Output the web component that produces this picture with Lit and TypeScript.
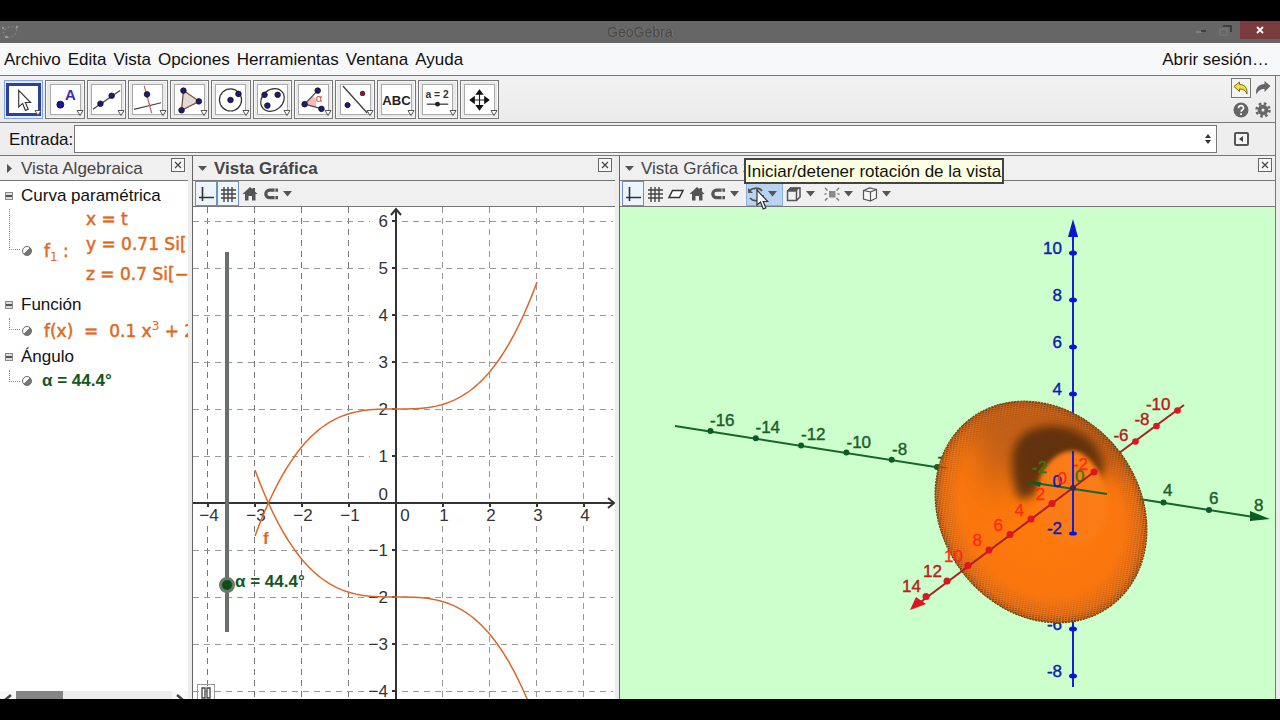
import { LitElement, html, svg, css } from "lit";
import { customElement, property } from "lit/decorators.js";

const range = (from: number, to: number) =>
  Array.from({ length: to - from + 1 }, (_, i) => from + i);

/* ---------- icons ---------- */

const point = (x: number, y: number, r = 3) =>
  svg`<circle cx=${x} cy=${y} r=${r} fill="#1f1a78" stroke="#111" stroke-width="0.8"/>`;

const tools = [
  { name: "Elige y mueve", art: svg`<path d="M10 5v19l4.500-4 3.200 8 3.300-1.400-3.400-7.600h6z" fill="#fff" stroke="#333" stroke-width="1.300"/>` },
  { name: "Punto", art: svg`<circle cx="10" cy="21" r="3.700" fill="#1d12b0" stroke="#111"/><text x="15" y="16" class="glyph-a">A</text>` },
  { name: "Recta", art: svg`<path d="M1 26L30 6" stroke="#444" stroke-width="1.300"/>${point(9, 20)}${point(21, 11.500)}` },
  { name: "Recta perpendicular", art: svg`<path d="M1 26L30 19" stroke="#444" stroke-width="1.300"/><path d="M12 1l8 29" stroke="#c0606c" stroke-width="1.300"/>${point(15, 10)}` },
  { name: "Polígono", art: svg`<path d="M9 6L26 17.500 7 27z" fill="#e6d9d2" stroke="#7a4a45" stroke-width="1.300"/>${point(9, 6)}${point(25.500, 17.500)}${point(7, 27)}` },
  { name: "Circunferencia", art: svg`<circle cx="15.500" cy="16" r="11.800" fill="none" stroke="#333" stroke-width="1.300"/>${point(15.500, 16)}${point(24, 9.500)}` },
  { name: "Elipse", art: svg`<ellipse cx="15.500" cy="16" rx="13.500" ry="11" transform="rotate(-40 15.500 16)" fill="none" stroke="#333" stroke-width="1.300"/>${point(7, 10.500)}${point(21, 10.500)}${point(10, 22)}` },
  { name: "Ángulo", art: svg`<path d="M7 20L14 11a11 11 0 0 1 4 12z" fill="#f6b9bd"/><path d="M20 6L6 20.500 25 25.500" fill="none" stroke="#444" stroke-width="1.300"/><text x="18" y="18" class="glyph-alpha">α</text>${point(20, 6)}${point(6, 20.500)}${point(24, 25.500)}` },
  { name: "Simetría axial", art: svg`<path d="M2 1L28 30" stroke="#444" stroke-width="1.500"/>${point(7, 21.500, 2.800)}<circle cx="23" cy="9" r="2.800" fill="#6b2238"/>` },
  { name: "Texto", art: svg`<text x="15.500" y="21" text-anchor="middle" class="glyph-abc">ABC</text>` },
  { name: "Deslizador", art: svg`<text x="15" y="14" text-anchor="middle" class="glyph-a2">a = 2</text><path d="M4 20.500h23" stroke="#333" stroke-width="1.300"/><circle cx="15.500" cy="20.500" r="2.600" fill="#222"/>` },
  { name: "Desplaza vista gráfica", art: svg`<path d="M15.500 8v16M8 16h16" stroke="#222" stroke-width="1.200"/><path d="M15.500 4.500l4.500 6h-9zM15.500 27.500l4.500-6h-9zM4.500 16l6-4.500v9zM26.500 16l-6-4.500v9z" fill="#111"/>` },
];

const icons: Record<string, unknown> = {
  axes: svg`<path d="M5.500 2v14M2 12.500h15" stroke="#333" stroke-width="1.600" fill="none"/>`,
  grid: svg`<path d="M5 2v15M9 2v15M13 2v15M2 5h15M2 9h15M2 13h15" stroke="#444" stroke-width="1.400"/>`,
  plane: svg`<path d="M5.500 5.500H16L12.500 12.500H2z" fill="#fff" stroke="#333" stroke-width="1.500"/>`,
  home: svg`<path d="M9 2l2.500 2.300V3h2.500v3.600l2.500 2.400H14.500v6.500H11V11H7.500v4.500H4V9H1.500z" fill="#555"/>`,
  magnet: svg`<path d="M16 5.200H7.500a3.700 3.700 0 0 0 0 7.400H16" fill="none" stroke="#555" stroke-width="3.200"/><path d="M13 3.500v3.400M13 11v3.400" stroke="#ddd" stroke-width="1"/>`,
  rotate: svg`<path d="M2 7a7 5 0 0 1 13-1M16 10a7 5 0 0 1-13 3" fill="none" stroke="#555" stroke-width="1.800"/><path d="M1 3v5h5z" fill="#555"/>`,
  box: svg`<path d="M2.500 6h9v9.500h-9zM2.500 6l3-3h9.500v9l-3.500 3.500" fill="none" stroke="#555" stroke-width="1.500"/><path d="M2 6l3.500-3.500h9.500L11.500 6z" fill="#555"/>`,
  light: svg`<path d="M6 6h6.500v6.500H6z" fill="#8a8a8a"/><path d="M2 3l2.500 2.500M16 3l-2.500 2.500M2 15.500L4.500 13M16 15.500L13.500 13M1.500 9h2M14.500 9h2" stroke="#777" stroke-width="1.400"/>`,
  cube: svg`<path d="M2.500 5.500l7 1.500v9l-7-2zM9.500 7l6-2.500v8.500l-6 3M2.500 5.500L8.500 3l7 1.500" fill="#f8f8f8" stroke="#555" stroke-width="1.200"/>`,
};

const icon = (name: string) =>
  html`<svg class="icon" viewBox="0 0 18 18" aria-hidden="true">${icons[name]}</svg>`;

const caret = html`<svg class="caret" viewBox="0 0 9 6" aria-hidden="true"><path d="M0 0h9L4.500 5.500z" fill="#555"/></svg>`;

const shared = css`
  :host { display: block; }
  * { box-sizing: border-box; }
  button {
    margin: 0;
    padding: 0;
    border: 0;
    background: none;
    font: inherit;
    color: inherit;
    display: flex;
    align-items: center;
  }
  svg { display: block; }
`;

/* ---------- style bar ---------- */

@customElement("style-bar")
export class StyleBar extends LitElement {
  @property({ attribute: false }) items: { icon: string; label: string; menu?: boolean; on?: boolean }[] = [];

  static styles = [
    shared,
    css`
      .bar {
        display: flex;
        align-items: flex-start;
        height: 26px;
        padding: 0 2px;
        background: #f0f0f0;
        border-bottom: 1px solid #777;
      }
      .item { width: 21px; height: 25px; border: 1px solid transparent; justify-content: center; }
      .menu { width: 37px; margin-left: 1px; gap: 3px; justify-content: flex-start; }
      .on { width: 22px; background: #eef4fc; border-color: #6d90bd; }
      .menu.on { width: 37px; background: #b9d3f2; border-color: #8fb0dc; }
      .icon { width: 18px; height: 18px; flex: none; }
      .caret { width: 9px; height: 6px; flex: none; }
    `,
  ];

  render() {
    return html`<div class="bar" role="toolbar">
      ${this.items.map(
        (i) => html`<button
          class="item ${i.menu ? "menu" : ""} ${i.on ? "on" : ""}"
          aria-label=${i.label}
        >${icon(i.icon)}${i.menu ? caret : ""}</button>`
      )}
    </div>`;
  }
}

/* ---------- dock header ---------- */

@customElement("dock-header")
export class DockHeader extends LitElement {
  @property() label = "";
  @property({ type: Boolean }) active = false;
  @property({ type: Boolean }) folded = false;

  static styles = [
    shared,
    css`
      .head {
        display: flex;
        align-items: center;
        height: 25px;
        padding: 0 3px 0 5px;
        gap: 7px;
        background: #f0f0f0;
        border-bottom: 1px solid #777;
        color: #444;
        font-size: 17px;
      }
      .title { flex: 1; margin: 0; font: inherit; white-space: nowrap; line-height: 26px; padding-top: 2px; }
      .active { font-weight: bold; }
      .toggle { width: 9px; height: 9px; }
      .close { width: 14px; height: 14px; align-self: flex-start; margin-top: 2px; border: 1px solid #666; background: #f7f7f7; }
    `,
  ];

  render() {
    return html`<header class="head">
      <button class="toggle" aria-label="Barra de estilo">
        <svg width="9" height="9" viewBox="0 0 9 9">
          <path d=${this.folded ? "M2 0l5 4.500L2 9z" : "M0 2h9L4.500 7z"} fill="#555"/>
        </svg>
      </button>
      <h2 class="title ${this.active ? "active" : ""}">${this.label}</h2>
      <button class="close" aria-label="Cerrar">
        <svg width="12" height="12" viewBox="0 0 12 12"><path d="M3 3l6 6M9 3L3 9" stroke="#444" stroke-width="1.200"/></svg>
      </button>
    </header>`;
  }
}

/* ---------- algebra view ---------- */

@customElement("algebra-view")
export class AlgebraView extends LitElement {
  static styles = [
    shared,
    css`
      :host { display: flex; flex-direction: column; min-width: 0; overflow: hidden; background: #fff; border-right: 4px solid #ececec; }
      .tree { flex: 1; min-height: 0; margin: 0; padding: 2px 0 0; list-style: none; font-size: 17px; color: #111; white-space: nowrap; overflow: hidden; }
      .group { display: flex; align-items: center; height: 26px; padding-left: 5px; gap: 8px; }
      .fold { width: 8px; height: 8px; border: 1px solid #888; background: linear-gradient(#ddd 0 2px, #555 2px 4px, #ddd 4px); }
      .object { display: flex; align-items: center; margin-left: 9px; }
      .branch { align-self: flex-start; width: 11px; flex: none; border: 1px dotted #888; border-width: 0 0 1px 1px; }
      .curve { height: 83px; }
      .function { height: 26px; }
      .angle { height: 22px; }
      .curve .branch { height: 41px; }
      .function .branch, .angle .branch { height: 12px; }
      .marble { width: 10px; height: 10px; margin: 0 12px 0 2px; flex: none; border-radius: 50%; border: 1px solid #666; background: linear-gradient(135deg, #fff 0 45%, #777 50%); }
      .math { font-family: "DejaVu Sans", sans-serif; color: #dd6a1c; -webkit-text-stroke: 0.5px #dd6a1c; }
      .math sub, .math sup { font-size: 12px; line-height: 0; -webkit-text-stroke: 0; }
      .name { width: 42px; flex: none; }
      .rows { display: grid; grid-template-rows: 20px 30px 30px; align-items: center; align-self: flex-start; line-height: 22px; }
      .value { font-weight: bold; color: #14561c; }
      .angle .marble { margin-right: 10px; }
      .scroll { display: flex; justify-content: space-between; height: 8px; background: #ececec; overflow: hidden; }
      .thumb { width: 47px; background: #858585; }
      .rest { flex: 1; }
      .step { width: 16px; height: 16px; background: #f7f7f7; }
    `,
  ];

  render() {
    return html`
      <dock-header label="Vista Algebraica" folded></dock-header>
      <ul class="tree">
        <li class="group"><button class="fold" aria-label="Plegar"></button>Curva paramétrica</li>
        <li class="object curve">
          <span class="branch"></span><span class="marble"></span>
          <span class="math name">f<sub>1</sub> :</span>
          <span class="math rows"><span>x = t</span><span>y = 0.71 Si[</span><span>z = 0.7 Si[−</span></span>
        </li>
        <li class="group"><button class="fold" aria-label="Plegar"></button>Función</li>
        <li class="object function">
          <span class="branch"></span><span class="marble"></span>
          <span class="math">f(x)&nbsp; =&nbsp; 0.1 x<sup>3</sup> + 2</span>
        </li>
        <li class="group"><button class="fold" aria-label="Plegar"></button>Ángulo</li>
        <li class="object angle">
          <span class="branch"></span><span class="marble"></span>
          <span class="value">α = 44.4°</span>
        </li>
      </ul>
      <div class="scroll">
        <button class="step" aria-label="Izquierda"><svg width="16" height="16"><path d="M11 4L5 9l6 5" fill="none" stroke="#444" stroke-width="2.500"/></svg></button>
        <span class="thumb"></span><span class="rest"></span>
        <button class="step" aria-label="Derecha"><svg width="16" height="16"><path d="M5 4l6 5-6 5" fill="none" stroke="#444" stroke-width="2.500"/></svg></button>
      </div>`;
  }
}

/* ---------- 2D view ---------- */

const UNIT = 47;
const OX = 203;
const OY = 296;
const sx = (x: number) => OX + x * UNIT;
const sy = (y: number) => OY - y * UNIT;
const minus = (n: number) => String(n).replace("-", "−");

const plot = (f: (x: number) => number) =>
  range(-60, 60)
    .map((i) => `${i === -60 ? "M" : "L"}${sx(i / 20)} ${sy(f(i / 20)).toFixed(2)}`)
    .join("");

@customElement("graphics-view")
export class GraphicsView extends LitElement {
  static styles = [
    shared,
    css`
      :host { display: flex; flex-direction: column; min-width: 0; overflow: hidden; border-left: 1px solid #666; border-right: 4px solid #ececec; background: #fff; }
      .canvas { position: relative; flex: 1; min-height: 0; overflow: hidden; }
      .plot { position: absolute; inset: 0; width: 100%; height: 100%; font-size: 17px; }
      .grid { stroke: #777; stroke-width: 1; stroke-dasharray: 6 5; }
      .pale { stroke: #999; }
      .axis { stroke: #333; stroke-width: 2; fill: none; }
      .halo { fill: #fff; }
      .tick { fill: #333; }
      .curve { fill: none; stroke: #d9692a; stroke-width: 1.5; }
      .tag { fill: #dd6a1c; font-weight: bold; font-size: 17px; }
      .slider {
        position: absolute;
        left: 26px;
        top: 37px;
        width: 16px;
        height: 396px;
        margin: 0;
        appearance: none;
        writing-mode: vertical-lr;
        direction: rtl;
        background: linear-gradient(#6b6f6b, #6b6f6b) center / 4px 380px no-repeat;
      }
      .slider::-webkit-slider-thumb { appearance: none; width: 16px; height: 16px; border-radius: 50%; border: 3px solid #6a7a6a; background: #0c4f14; }
      .alpha { position: absolute; left: 42px; top: 365px; font-size: 17px; line-height: 20px; font-weight: bold; color: #14561c; }
      .pause { position: absolute; left: 4px; bottom: -3px; width: 18px; height: 18px; justify-content: center; border: 1px solid #999; }
    `,
  ];

  render() {
    return html`
      <dock-header label="Vista Gráfica" active></dock-header>
      <style-bar .items=${[
        { icon: "axes", label: "Ejes", on: true },
        { icon: "grid", label: "Cuadrícula", on: true },
        { icon: "home", label: "Vista estándar" },
        { icon: "magnet", label: "Captura de punto", menu: true },
      ]}></style-bar>
      <div class="canvas">
        <svg class="plot">
          ${range(-4, 4).map((n) => (n ? svg`<path class="grid ${n > 0 ? "pale" : ""}" d="M${sx(n) - 0.5} 0V600"/>` : ""))}
          ${range(-4, 6).map((n) => (n ? svg`<path class="grid pale" d="M0 ${sy(n) + 0.5}H420"/>` : ""))}
          ${range(-4, 6).map((n) => svg`<rect class="halo" x=${OX - 26} y=${sy(n) - 10} width="24" height="20"/>`)}
          ${range(-4, 4).map((n) => svg`<rect class="halo" x=${sx(n) - 12} y=${OY + 3} width="24" height="20"/>`)}
          <path class="axis" d="M${OX} 700V3M${OX - 5} 8l5-6 5 6"/>
          <path class="axis" d="M0 ${OY}H420M415 ${OY - 5}l6 5-6 5"/>
          ${range(-4, 4).map((n) => svg`<path class="axis" d="M${sx(n)} ${OY}v4"/>
            <text class="tick" x=${n ? sx(n) + 1 : sx(0) + 9} y=${OY + 18} text-anchor="middle">${minus(n)}</text>`)}
          ${range(-4, 6).map((n) => svg`<path class="axis" d="M${OX - 4} ${sy(n)}h4"/>
            <text class="tick" x=${OX - 8} y=${n ? sy(n) + 6 : OY - 3} text-anchor="end">${minus(n)}</text>`)}
          <path class="curve" d=${plot((x) => 0.1 * x ** 3 + 2)}/>
          <path class="curve" d=${plot((x) => -0.1 * x ** 3 - 2)}/>
          <text class="tag" x="70" y="337">f</text>
        </svg>
        <input class="slider" id="angle" type="range" min="0" max="360" step="0.1" value="44.4" />
        <label class="alpha" for="angle">α = 44.4°</label>
        <button class="pause" aria-label="Pausa"><svg width="12" height="12"><path d="M2 1h3v10H2zM7 1h3v10H7z" fill="#fff" stroke="#444" stroke-width="1.300"/></svg></button>
      </div>`;
  }
}

/* ---------- 3D view ---------- */

const CX = 453;
const CY = 281;

@customElement("space-view")
export class SpaceView extends LitElement {
  static styles = [
    shared,
    css`
      :host { display: flex; flex-direction: column; min-width: 0; position: relative; border-left: 1px solid #666; background: #ccffcc; }
      .scene { flex: 1; min-height: 0; width: 100%; overflow: hidden; font-size: 17px; }
      .x { stroke: #a82020; fill: none; stroke-width: 2; }
      .y { stroke: #14662a; fill: none; stroke-width: 2; }
      .z { stroke: #1420d8; fill: none; stroke-width: 2; }
      .x-dot { fill: #e01420; }
      .y-dot { fill: #0c5a24; }
      .z-dot { fill: #0c14d8; }
      .x-num { fill: #b42020; stroke: #b42020; stroke-width: 0.4; }
      .x-in { fill: #ff2a14; stroke: #ff2a14; stroke-width: 0.3; }
      .y-num { fill: #1c5c2a; stroke: #1c5c2a; stroke-width: 0.4; }
      .y-in { fill: #2f7a10; stroke: #2f7a10; stroke-width: 0.4; }
      .z-num { fill: #0c1cb0; stroke: #0c1cb0; stroke-width: 0.4; }
      .tooltip { position: absolute; left: 124px; top: 2px; height: 26px; padding: 0 1px; border: 2px solid #444; background: #fdffe2; color: #111; font-size: 17px; line-height: 24px; white-space: nowrap; }
      .pointer { position: absolute; left: 136px; top: 33px; }
    `,
  ];

  render() {
    const xBack = [[515.5, 234.5], [536.5, 219], [557.5, 203.5]];
    const xFront = range(1, 7);
    return html`
      <dock-header label="Vista Gráfica 3D"></dock-header>
      <style-bar .items=${[
        { icon: "axes", label: "Ejes", on: true },
        { icon: "grid", label: "Cuadrícula" },
        { icon: "plane", label: "Plano" },
        { icon: "home", label: "Vista estándar" },
        { icon: "magnet", label: "Captura de punto", menu: true },
        { icon: "rotate", label: "Rotación de la vista", menu: true, on: true },
        { icon: "box", label: "Dirección de vista", menu: true },
        { icon: "light", label: "Recorte", menu: true },
        { icon: "cube", label: "Proyección", menu: true },
      ]}></style-bar>
      <svg class="scene">
        <defs>
          <radialGradient id="rim">
            <stop offset="0" stop-color="#ff7a0a"/><stop offset="0.75" stop-color="#fa760e"/>
            <stop offset="0.93" stop-color="#ee7418"/><stop offset="1" stop-color="#d86c1c"/>
          </radialGradient>
          <radialGradient id="fade">
            <stop offset="0.78" stop-color="#000"/><stop offset="0.93" stop-color="#555"/><stop offset="1" stop-color="#eee"/>
          </radialGradient>
          <pattern id="mesh" width="3" height="2" patternUnits="userSpaceOnUse" patternTransform="rotate(8)">
            <rect width="2" height="1" fill="#5a3210"/>
          </pattern>
          <mask id="edge"><ellipse cx="421" cy="305" rx="117" ry="99" transform="rotate(53 421 305)" fill="url(#fade)"/></mask>
          <clipPath id="body"><ellipse cx="421" cy="305" rx="117" ry="99" transform="rotate(53 421 305)"/></clipPath>
          <filter id="soft" x="-30%" y="-30%" width="160%" height="160%"><feGaussianBlur stdDeviation="5"/></filter>
          <filter id="softer" x="-30%" y="-30%" width="160%" height="160%"><feGaussianBlur stdDeviation="14"/></filter>
          <filter id="crisp"><feGaussianBlur stdDeviation="2"/></filter>
        </defs>

        <path class="z" d="M${CX} 25V480"/>
        <path class="z-dot" d="M${CX} 12l5 18h-10z"/>
        ${[[46, "10"], [93, "8"], [140, "6"], [187, "4"], [422, "-6"], [469, "-8"]].map(
          ([y, t]) => svg`<ellipse class="z-dot" cx=${CX} cy=${y} rx="4" ry="2.500"/>
            <text class="z-num" x="442" y=${+y + 1} text-anchor="end">${t}</text>`
        )}
        <path class="y" d="M55 219L640 311"/>
        <path class="y-dot" d="M650 312l-20-8v10z"/>
        ${range(0, 5).map((i) => svg`<circle class="y-dot" cx=${90.5 + i * 45.3} cy=${224 + i * 7.2} r="3"/>
          <text class="y-num" x=${90 + i * 45.5} y=${219 + i * 7.2}>${-16 + i * 2}</text>`)}
        <circle class="y-dot" cx="543.500" cy="295.500" r="3"/><circle class="y-dot" cx="589" cy="303" r="3"/>
        <text class="y-num" x="543" y="289">4</text><text class="y-num" x="589" y="297">6</text><text class="y-num" x="634" y="304">8</text>
        <path class="x" d="M495 249L564 198"/>
        ${xBack.map(([x, y], i) => svg`<circle class="x-dot" cx=${x} cy=${y} r="3.300"/>
          <text class="x-num" x=${x - 7} y=${y - 1} text-anchor="end">${-6 - 2 * i}</text>`)}

        <ellipse cx="421" cy="305" rx="117" ry="99" transform="rotate(53 421 305)" fill="url(#rim)"/>
        <g clip-path="url(#body)">
          <path d="M350 215Q390 185 450 200T525 270L480 262Q440 215 405 245T392 300L370 280z" fill="#a8541a" opacity="0.7" filter="url(#softer)"/>
          <path d="M397 288C388 262 388 236 408 224C434 212 466 222 478 242C486 254 486 266 478 272L455 252C436 246 426 262 420 280C412 292 402 296 397 288z" fill="#673610" filter="url(#soft)"/>
          <path d="M400 240C414 220 448 220 470 244L448 250C430 250 420 266 408 272z" fill="#62330f" opacity="0.85" filter="url(#soft)"/>
          <path d="M418 284C420 260 438 242 456 244C476 250 490 280 488 308C484 330 460 346 440 336C424 326 416 306 418 284z" fill="#fb7b12" filter="url(#crisp)"/>
        </g>
        <rect x="300" y="180" width="240" height="250" fill="url(#mesh)" mask="url(#edge)"/>
        <ellipse cx="421" cy="305" rx="117" ry="99" transform="rotate(53 421 305)" fill="none" stroke="#6b4412" stroke-width="1.200" stroke-dasharray="2 1"/>
        <path d="M315 259l12 2M520 292l8 1" stroke="#7a4a14" stroke-width="1.200"/>

        <path class="y" d="M408 275L487 287"/>
        <path class="y-dot" d="M406 274l15 1-1 5z"/>
        <text class="y-in" x="412" y="266">-2</text><text class="y-in" x="455" y="275">0</text>
        <path class="z" d="M${CX} 244V326"/><ellipse class="z-dot" cx=${CX} cy="326.500" rx="4" ry="2"/>
        <text class="z-num" x="442" y="280" text-anchor="end">0</text>
        <text class="z-num" x="442" y="327" text-anchor="end">-2</text>
        <path class="x" d="M474 265L298 397"/>
        <path class="x-dot" d="M290 403l6-13 10 7z"/>
        <circle class="x-dot" cx="474" cy="265" r="3.500"/>
        <circle cx=${CX} cy=${CY} r="3" fill="#3a2a50"/>
        <text class="x-in" x="468" y="263" text-anchor="end">-2</text>
        <text class="x-in" x="447" y="277" text-anchor="end">0</text>
        ${xFront.map((i) => svg`<circle class="x-dot" cx=${CX - 21 * i} cy=${CY + 15.5 * i} r="3.500"/>
          <text class=${i > 5 ? "x-num" : "x-in"} x=${CX - 7 - 21 * i + (i > 4 ? 2 : 0)} y=${CY - 3 + 15.3 * i} text-anchor="end">${2 * i}</text>`)}
      </svg>
      <div class="tooltip" role="tooltip">Iniciar/detener rotación de la vista</div>
      <svg class="pointer" width="14" height="22" viewBox="0 0 14 22" aria-hidden="true"><path d="M1 1v15l3.500-3 2.700 7 2.600-1-2.600-6.500h4.500z" fill="#fff" stroke="#333" stroke-width="1.200"/></svg>`;
  }
}

/* ---------- window ---------- */

@customElement("app-root")
export class AppRoot extends LitElement {
  static styles = [
    shared,
    css`
      :host { height: 100vh; font-family: "Liberation Sans", Arial, sans-serif; color: #111; }
      .screen { display: flex; flex-direction: column; height: 100%; padding: 21px 0; background: #000; overflow: hidden; }
      .title { display: grid; grid-template-columns: 1fr auto 1fr; align-items: center; height: 22px; flex: none; background: #666; color: #8a8a8a; font-size: 14px; }
      .name { color: #484848; text-shadow: 1px 0 #7c7c7c; line-height: 22px; }
      .controls { display: flex; justify-content: flex-end; align-self: start; gap: 10px; height: 18px; }
      .close { width: 40px; justify-content: center; background: #7a3b3d; margin-left: -2px; }
      .menu { display: flex; align-items: center; height: 33px; flex: none; padding: 2px 11px 0 4px; gap: 7px; background: #f7f8f9; border-bottom: 1px solid #777; font-size: 17px; }
      .login { margin-left: auto; }
      .frame { flex: 1; min-height: 0; display: flex; flex-direction: column; border-right: 1px solid #777; margin-right: 4px; background: #eee; }
      .tools { display: flex; justify-content: space-between; align-items: center; height: 47px; flex: none; padding: 0 2px 0 4px; border-bottom: 1px solid #777; background: linear-gradient(#f2f2f2, #ebebeb); }
      .set { display: grid; grid-template-columns: repeat(12, 1fr); gap: 2px; width: 495px; }
      .tool { position: relative; height: 39px; justify-content: center; border: 1px solid #777; background: #e9e9e9; box-shadow: inset 0 0 0 1px #f8f8f8; }
      .art { width: 31px; height: 31px; background: #fff; border: 1px solid #aaa; overflow: visible; }
      .chosen { border: 1px solid #7fa6e0; box-shadow: none; }
      .chosen .art { width: 35px; height: 33px; border: 3px solid #2b419a; }
      .more { position: absolute; right: 0; bottom: 1px; }
      .glyph-a { font: bold 16px "Liberation Sans", Arial, sans-serif; fill: #3a2cc0; }
      .glyph-alpha { font: 12px "Liberation Sans", Arial, sans-serif; fill: #d0404c; }
      .glyph-abc { font: bold 14px "Liberation Sans", Arial, sans-serif; fill: #222; }
      .glyph-a2 { font: bold 11px "Liberation Sans", Arial, sans-serif; fill: #333; }
      .side { display: grid; grid-template-columns: 20px 20px; column-gap: 2px; row-gap: 2px; justify-items: center; }
      .side button { width: 20px; height: 20px; justify-content: center; }
      .undo { border: 1px solid #777; background: #f4f4f4; }
      .entry { display: flex; align-items: center; height: 33px; flex: none; padding: 0 25px 0 9px; border-bottom: 1px solid #777; font-size: 17px; }
      .entry label { padding-top: 2px; }
      .field { flex: 1; display: flex; height: 28px; margin: 0 15px 0 1px; border: 1px solid #777; background: #fff; }
      .field input { flex: 1; min-width: 0; border: 0; outline: 0; padding: 0 4px; font: inherit; background: none; }
      .spin { width: 16px; justify-content: center; }
      .docks { flex: 1; min-height: 0; display: grid; grid-template-columns: 192px 427fr 656fr; grid-template-rows: minmax(0, 1fr); }
      .desk { flex: 1; min-height: 0; display: flex; flex-direction: column; background: #ececec; }
    `,
  ];

  render() {
    return html`<div class="screen">
      <div class="title">
        <svg width="20" height="18" viewBox="0 0 20 18"><ellipse cx="10" cy="9" rx="7" ry="5" transform="rotate(-25 10 9)" fill="none" stroke="#858585" stroke-dasharray="2 2"/><path d="M2 5h2M16 4h2M5 14h3" stroke="#999" stroke-width="2"/></svg>
        <span class="name">GeoGebra</span>
        <div class="controls">
          <button aria-label="Minimizar"><svg width="14" height="18"><path d="M2 11h6" stroke="#808080" stroke-width="2"/><path d="M7 10h5" stroke="#333" stroke-width="1.500"/></svg></button>
          <button aria-label="Restaurar"><svg width="14" height="18"><path d="M5 5h8v6" fill="none" stroke="#333" stroke-width="1.500"/><path d="M2 8h7v6H2z" fill="none" stroke="#7c7c7c"/></svg></button>
          <button class="close" aria-label="Cerrar"><svg width="10" height="10"><path d="M2 2l6 6M8 2L2 8" stroke="#fff" stroke-width="1.800"/></svg></button>
        </div>
      </div>
      <nav class="menu">
        ${["Archivo", "Edita", "Vista", "Opciones", "Herramientas", "Ventana", "Ayuda"].map((m) => html`<button>${m}</button>`)}
        <button class="login">Abrir sesión…</button>
      </nav>
      <div class="desk">
        <div class="frame">
          <div class="tools">
            <div class="set" role="toolbar">
              ${tools.map((t, i) => html`<button class="tool ${i ? "" : "chosen"}" aria-label=${t.name}>
                <svg class="art" viewBox="0 0 31 31">${t.art}</svg>
                <svg class="more" width="8" height="8" viewBox="0 0 8 8"><path d="M1 1.500h6L4 6.500z" fill="#fff" stroke="#555"/></svg>
              </button>`)}
            </div>
            <div class="side">
              <button class="undo" aria-label="Deshace"><svg width="16" height="16" viewBox="0 0 16 16"><path d="M1 6.500L6.500 2v2.500c5 0 8 3 7.500 9.500-1.500-3.500-3.500-5-7.500-5V11.500z" fill="#f4dc3c" stroke="#7a6a10"/></svg></button>
              <button aria-label="Rehace"><svg width="16" height="16" viewBox="0 0 16 16"><path d="M15.500 6L9.500 1v3C3.500 4.500 0 8 1.500 14.500 3.500 10.500 5.500 9 9.500 9v3z" fill="#666"/></svg></button>
              <button aria-label="Ayuda"><svg width="16" height="16" viewBox="0 0 16 16"><circle cx="8" cy="8" r="7.500" fill="#666"/><path d="M5.500 6.200c0-3.600 5.200-3.400 5 0-.1 1.700-2.400 1.800-2.400 3.600M8 11.200v1.800" fill="none" stroke="#fff" stroke-width="1.700"/></svg></button>
              <button aria-label="Preferencias"><svg width="16" height="16" viewBox="0 0 16 16"><circle cx="8" cy="8" r="5.300" fill="#666"/><circle cx="8" cy="8" r="6.500" fill="none" stroke="#666" stroke-width="2.500" stroke-dasharray="2.600 2.505"/><circle cx="8" cy="8" r="1.500" fill="#eee"/></svg></button>
            </div>
          </div>
          <div class="entry">
            <label for="entry">Entrada:</label>
            <div class="field">
              <input id="entry" type="text" />
              <button class="spin" aria-label="Historial"><svg width="8" height="12" viewBox="0 0 8 12"><path d="M4 1l3 4H1zM4 11l3-4H1z" fill="#333"/></svg></button>
            </div>
            <button aria-label="Lista de comandos"><svg width="18" height="16" viewBox="0 0 18 16"><rect x="3" y="2" width="13" height="12" rx="1" fill="#f4f4f4" stroke="#555" stroke-width="2"/><path d="M7 8l4-3v6z" fill="#444"/></svg></button>
          </div>
          <div class="docks">
            <algebra-view></algebra-view>
            <graphics-view></graphics-view>
            <space-view></space-view>
          </div>
        </div>
      </div>
    </div>`;
  }
}
